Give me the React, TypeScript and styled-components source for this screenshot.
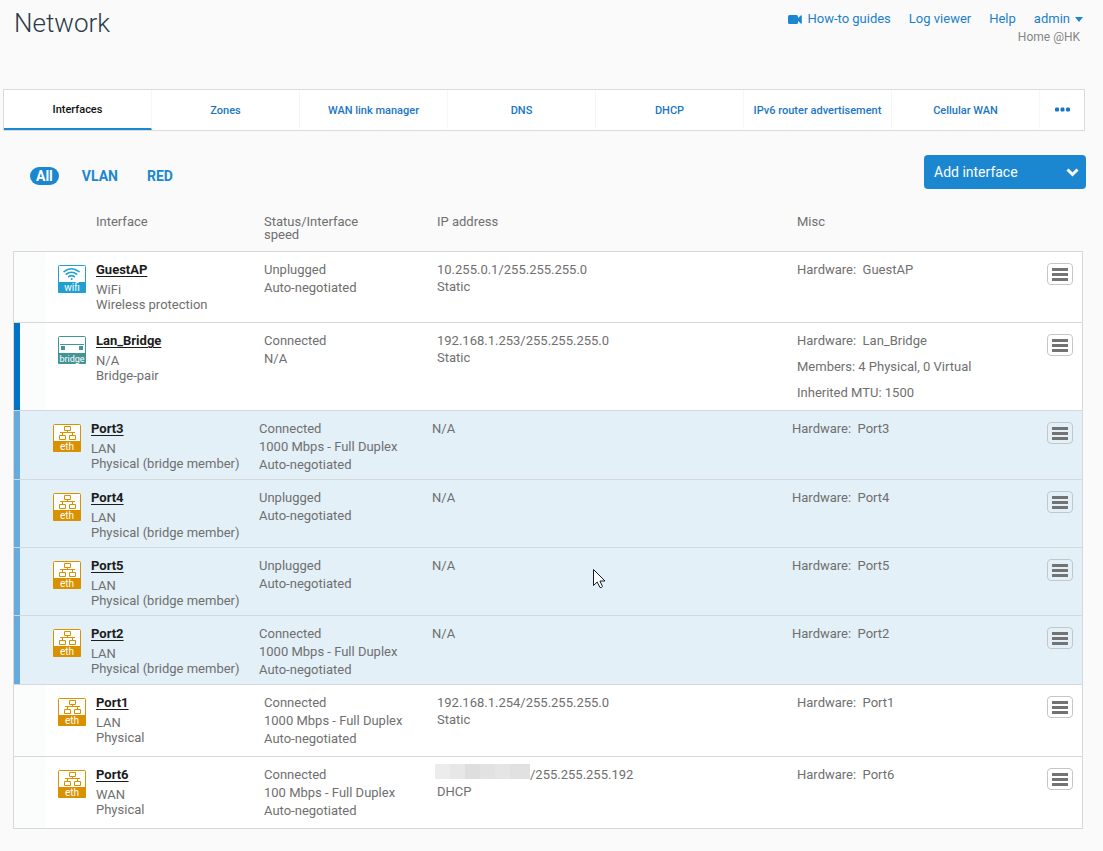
import React from 'react';
import styled, { createGlobalStyle, css } from 'styled-components';

const blue = '#1a87d0';
const line = '#d5d9dc';

const GlobalStyle = createGlobalStyle`
  *, *::before, *::after { box-sizing: border-box; }
  body {
    margin: 0;
    background: #fafafa;
    color: #6f6f6f;
    font: 13px/18px Roboto, "Liberation Sans", sans-serif;
  }
  button { font: inherit; cursor: pointer; }
  a { color: #1a76c4; text-decoration: none; }
`;

const Page = styled.main`
  position: relative;
  padding: 0 18px 22px 3px;
`;

const Header = styled.header`
  display: flex;
  justify-content: space-between;
  align-items: flex-start;
  height: 89px;
  padding: 5px 2px 0 11px;
`;

const Title = styled.h1`
  margin: 0;
  font-size: 26px;
  line-height: 37px;
  font-weight: 300;
  color: #2b3a48;
`;

const Account = styled.div`
  padding-top: 5px;
  text-align: right;
`;

const HeaderLinks = styled.nav`
  display: flex;
  gap: 18px;
`;

const HeaderLink = styled.a`
  display: flex;
  align-items: center;
  gap: 5px;
  color: #1c7fca;
`;

const Organisation = styled.div`
  padding-right: 3px;
  font-size: 12px;
  color: #868686;
`;

const Tabs = styled.nav`
  display: flex;
  height: 42px;
  border: 1px solid #d9dbdd;
  background: #fff;
`;

const Tab = styled.a<{ $active?: boolean }>`
  flex: 1 1 0;
  display: flex;
  align-items: center;
  justify-content: center;
  border-right: 1px solid #f6f6f6;
  border-bottom: 2px solid transparent;
  padding-top: 3px;
  font-size: 11px;
  font-weight: 500;
  white-space: nowrap;
  color: #1a76c4;
  ${p => p.$active && css`
    padding-top: 1px;
    color: #111;
    border-bottom-color: ${blue};
  `}
`;

const MoreTabs = styled.button`
  flex: 0 0 44px;
  display: flex;
  align-items: center;
  justify-content: center;
  border: 0;
  padding: 0 0 2px;
  background: none;
`;

const Toolbar = styled.div`
  display: flex;
  justify-content: space-between;
  align-items: flex-start;
  margin-right: -1px;
  padding: 24px 0 0 27px;
`;

const Filters = styled.div`
  display: flex;
  gap: 17px;
  padding-top: 12px;
`;

const Filter = styled.button<{ $active?: boolean }>`
  height: 18px;
  border: 0;
  border-radius: 9px;
  padding: 0 6px;
  font-size: 14px;
  line-height: 18px;
  font-weight: 700;
  color: ${p => (p.$active ? '#fff' : blue)};
  background: ${p => (p.$active ? blue : 'none')};
`;

const AddButton = styled.button`
  display: flex;
  align-items: center;
  justify-content: space-between;
  width: 162px;
  height: 34px;
  border: 0;
  border-radius: 4px;
  padding: 0 7px 0 10px;
  font-size: 14px;
  color: #fff;
  background: ${blue};
`;

const Table = styled.table`
  width: calc(100% - 12px);
  margin: 20px 2px 0 10px;
  border-collapse: separate;
  border-spacing: 0;
  table-layout: fixed;
`;

const Column = styled.col<{ $width?: number }>`
  width: ${p => (p.$width ? `${p.$width}px` : 'auto')};
`;

const HeadCell = styled.th`
  padding: 6px 60px 10px 5px;
  vertical-align: top;
  text-align: left;
  font-weight: 400;
  line-height: 13px;
`;

const Cell = styled.td`
  border-top: 1px solid ${line};
  padding: 9px 0 8px 5px;
  vertical-align: top;
  white-space: nowrap;
`;

const IconCell = styled(Cell)`
  border-left: 1px solid ${line};
  padding: 13px 0 0 44px;
`;

const ActionCell = styled(Cell)`
  border-right: 1px solid ${line};
  padding: 11px 9px 0 0;
  text-align: right;
`;

type Kind = 'plain' | 'bridge' | 'member';

const Row = styled.tr<{ $kind: Kind }>`
  height: ${p => (p.$kind === 'member' ? 68 : 71)}px;
  background: ${p => (p.$kind === 'member' ? '#e3f0f8' : '#fff')};
  &:last-child > td { border-bottom: 1px solid ${line}; }
  ${IconCell} {
    background: ${p => (p.$kind === 'member' ? 'none' : 'linear-gradient(to right, #fbfdfd 32px, transparent 32px)')};
  }
  ${p => p.$kind === 'bridge' && css`
    ${IconCell} { box-shadow: inset 6px 0 0 #0073c6; }
  `}
  ${p => p.$kind === 'member' && css`
    ${Cell} { padding-left: 0; padding-bottom: 5px; }
    ${IconCell} { padding-left: 39px; box-shadow: inset 6px 0 0 #66abdc; }
  `}
`;

const Name = styled.a`
  display: inline-block;
  font-weight: 700;
  color: #1c1c1c;
  text-decoration: underline;
  text-underline-offset: 2px;
`;

const Details = styled.div`
  padding-top: 3px;
  line-height: 15px;
`;

const Address = styled.div`
  line-height: 17px;
`;

const MiscList = styled.div`
  display: grid;
  gap: 8px;
  white-space: pre;
`;

const Redacted = styled.span`
  display: inline-block;
  width: 95px;
  height: 15px;
  margin: -2px 0 4px -2px;
  vertical-align: bottom;
  background: linear-gradient(to right,
    #ececec 15px, #e7e7e7 15px 30px, #dedede 30px 45px,
    #e2e2e2 45px 60px, #e5e5e5 60px 75px, #e1e1e1 75px);
`;

const MenuButton = styled.button`
  display: inline-flex;
  align-items: center;
  justify-content: center;
  width: 26px;
  height: 22px;
  border: 1px solid #c4c7c9;
  border-radius: 4px;
  padding: 1px 0 0;
  background: transparent;
  vertical-align: top;
`;

const TypeIcon = styled.svg`
  display: block;
`;

const Pointer = styled.svg`
  position: absolute;
  left: 593px;
  top: 569px;
  pointer-events: none;
`;

type Device = 'wifi' | 'bridge' | 'eth';
const deviceColor: Record<Device, string> = { wifi: '#219fd0', bridge: '#429497', eth: '#d99100' };

function DeviceIcon({ device }: { device: Device }) {
  const c = deviceColor[device];
  return (
    <TypeIcon width="28" height="28" viewBox="0 0 28 28" role="img" aria-label={device}>
      <rect x=".5" y=".5" width="27" height="27" rx="1" fill="#fff" stroke={c} />
      <rect y="17" width="28" height="11" rx="1" fill={c} />
      {device === 'wifi' && (
        <g fill="none" stroke={c} strokeWidth="1.6" strokeLinecap="round">
          <path d="M6 6.600Q13.500 .8 21 6.600M8.300 9.200Q13.500 5.200 18.700 9.200M10.700 11.700Q13.500 9.500 16.300 11.700" />
          <circle cx="13.500" cy="14" r=".6" fill={c} strokeWidth=".8" />
        </g>
      )}
      {device === 'bridge' && (
        <path d="M2 8h24v1H2zM3 10h4v4H3zM21 10h4v4h-4z" fill={c} />
      )}
      {device === 'eth' && (
        <path
          d="M11.500 2.500h6v4h-6zM14.500 7v2M9.500 11V8.500M19.500 11V8.500M6.500 11.500h6v4h-6zM16.500 11.500h6v4h-6zM7 8.500h15"
          fill="none"
          stroke={c}
        />
      )}
      <text
        x="14"
        y="26"
        fill="#fff"
        textAnchor="middle"
        fontFamily="Roboto, sans-serif"
        fontSize={device === 'bridge' ? 9 : 10}
      >
        {device}
      </text>
    </TypeIcon>
  );
}

interface Interface {
  kind: Kind;
  device: Device;
  name: string;
  zone: string;
  type: string;
  status: string[];
  ip: string;
  hidden?: boolean;
  mode?: string;
  extra?: string[];
}

const member = 'Physical (bridge member)';
const auto = 'Auto-negotiated';
const gigabit = '1000 Mbps - Full Duplex';

const interfaces: Interface[] = [
  { kind: 'plain', device: 'wifi', name: 'GuestAP', zone: 'WiFi', type: 'Wireless protection', status: ['Unplugged', auto], ip: '10.255.0.1/255.255.255.0', mode: 'Static' },
  { kind: 'bridge', device: 'bridge', name: 'Lan_Bridge', zone: 'N/A', type: 'Bridge-pair', status: ['Connected', 'N/A'], ip: '192.168.1.253/255.255.255.0', mode: 'Static', extra: ['Members: 4 Physical, 0 Virtual', 'Inherited MTU: 1500'] },
  { kind: 'member', device: 'eth', name: 'Port3', zone: 'LAN', type: member, status: ['Connected', gigabit, auto], ip: 'N/A' },
  { kind: 'member', device: 'eth', name: 'Port4', zone: 'LAN', type: member, status: ['Unplugged', auto], ip: 'N/A' },
  { kind: 'member', device: 'eth', name: 'Port5', zone: 'LAN', type: member, status: ['Unplugged', auto], ip: 'N/A' },
  { kind: 'member', device: 'eth', name: 'Port2', zone: 'LAN', type: member, status: ['Connected', gigabit, auto], ip: 'N/A' },
  { kind: 'plain', device: 'eth', name: 'Port1', zone: 'LAN', type: 'Physical', status: ['Connected', gigabit, auto], ip: '192.168.1.254/255.255.255.0', mode: 'Static' },
  { kind: 'plain', device: 'eth', name: 'Port6', zone: 'WAN', type: 'Physical', status: ['Connected', '100 Mbps - Full Duplex', auto], ip: '/255.255.255.192', hidden: true, mode: 'DHCP' },
];

const tabs = ['Interfaces', 'Zones', 'WAN link manager', 'DNS', 'DHCP', 'IPv6 router advertisement', 'Cellular WAN'];

export default function App() {
  return (
    <Page>
      <GlobalStyle />
      <Header>
        <Title>Network</Title>
        <Account>
          <HeaderLinks>
            <HeaderLink href="#guides">
              <svg width="14" height="9" viewBox="0 0 14 9" fill={blue} aria-hidden="true">
                <rect width="10" height="9" rx="1.5" />
                <path d="M9.500 3.500 13 .3q.8-.3.8.6v7.200q0 .9-.8.6L9.500 5.500z" />
              </svg>
              How-to guides
            </HeaderLink>
            <HeaderLink href="#log">Log viewer</HeaderLink>
            <HeaderLink href="#help">Help</HeaderLink>
            <HeaderLink href="#admin">
              admin
              <svg width="8" height="5" viewBox="0 0 8 5" fill={blue} aria-hidden="true">
                <path d="M0 0h8L4 5z" />
              </svg>
            </HeaderLink>
          </HeaderLinks>
          <Organisation>Home @HK</Organisation>
        </Account>
      </Header>

      <Tabs>
        {tabs.map((t, i) => (
          <Tab key={t} href="#tab" $active={i === 0}>{t}</Tab>
        ))}
        <MoreTabs aria-label="More tabs">
          <svg width="15" height="5" viewBox="0 0 15 5" fill="#1a76c4" aria-hidden="true">
            <rect y=".5" width="4" height="4" rx="1.2" />
            <rect x="5.500" y=".5" width="4" height="4" rx="1.2" />
            <rect x="11" y=".5" width="4" height="4" rx="1.2" />
          </svg>
        </MoreTabs>
      </Tabs>

      <Toolbar>
        <Filters>
          <Filter $active>All</Filter>
          <Filter>VLAN</Filter>
          <Filter>RED</Filter>
        </Filters>
        <AddButton>
          Add interface
          <svg width="13" height="9" viewBox="0 0 13 9" fill="none" stroke="#fff" strokeWidth="3" aria-hidden="true">
            <path d="M1.500 1.500l5 5 5-5" />
          </svg>
        </AddButton>
      </Toolbar>

      <Table>
        <colgroup>
          <Column $width={78} />
          <Column $width={168} />
          <Column $width={173} />
          <Column $width={360} />
          <Column />
          <Column $width={43} />
        </colgroup>
        <thead>
          <tr>
            <HeadCell as="td" />
            <HeadCell>Interface</HeadCell>
            <HeadCell>Status/Interface speed</HeadCell>
            <HeadCell>IP address</HeadCell>
            <HeadCell>Misc</HeadCell>
            <HeadCell as="td" />
          </tr>
        </thead>
        <tbody>
          {interfaces.map(n => (
            <Row key={n.name} $kind={n.kind}>
              <IconCell><DeviceIcon device={n.device} /></IconCell>
              <Cell>
                <Name href="#interface">{n.name}</Name>
                <Details>
                  <div>{n.zone}</div>
                  <div>{n.type}</div>
                </Details>
              </Cell>
              <Cell>{n.status.map(s => <div key={s}>{s}</div>)}</Cell>
              <Cell>
                <Address>{n.hidden && <Redacted />}{n.ip}</Address>
                {n.mode && <Address>{n.mode}</Address>}
              </Cell>
              <Cell>
                <MiscList>
                  <div>{`Hardware:  ${n.name}`}</div>
                  {n.extra?.map(e => <div key={e}>{e}</div>)}
                </MiscList>
              </Cell>
              <ActionCell>
                <MenuButton aria-label={`Actions for ${n.name}`}>
                  <svg width="16" height="13" viewBox="0 0 16 13" fill="#737373" aria-hidden="true">
                    <path d="M0 0h16v3H0zM0 5h16v3H0zM0 10h16v3H0z" />
                  </svg>
                </MenuButton>
              </ActionCell>
            </Row>
          ))}
        </tbody>
      </Table>

      <Pointer width="13" height="20" viewBox="0 0 13 20" aria-hidden="true">
        <path
          d="M.5.5v16l3.700-3.500 2.800 5.500q1.500.5 2.500-1L6.900 12H12z"
          fill="#fff"
          stroke="#161a2c"
        />
      </Pointer>
    </Page>
  );
}
